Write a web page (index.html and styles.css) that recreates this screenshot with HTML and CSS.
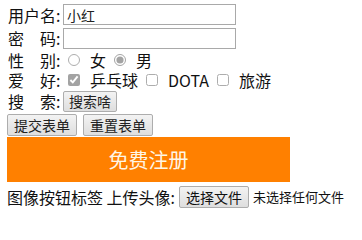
FILE: index.html
```html
<!DOCTYPE html>
<html>
<head>
<meta charset="utf-8">
<link rel="stylesheet" href="styles.css">
</head>
<body>
<form class="form">
  <div class="row r1"><span class="label">用户名:</span><input class="text" type="text" value="小红"></div>
  <div class="row r2"><span class="label">密&emsp;码:</span><input class="text" type="password"></div>
  <div class="row r3"><span class="label">性&emsp;别:</span>
    <input class="radio" type="radio" name="sex"><span class="opt">女</span>
    <input class="radio" type="radio" name="sex" checked><span class="opt">男</span></div>
  <div class="row r4"><span class="label">爱&emsp;好:</span>
    <input class="check" type="checkbox" checked><span class="opt">乒乓球</span>
    <input class="check" type="checkbox"><span class="opt">DOTA</span>
    <input class="check" type="checkbox"><span class="opt">旅游</span></div>
  <div class="row r5"><span class="label">搜&emsp;索:</span><button type="button" class="btn">搜索啥</button></div>
  <div class="row r6"><button type="reset" class="btn btn-lg">提交表单</button><button type="reset" class="btn btn-lg">重置表单</button></div>
  <div class="reg">免费注册</div>
  <div class="row r7"><span>图像按钮标签 上传头像:</span><span class="filebtn">选择文件</span><span class="nofile">未选择任何文件</span></div>
</form>
</body>
</html>
```
FILE: styles.css
```css
* { box-sizing: border-box; }
body {
  margin: 0;
  padding: 0;
  background: #fff;
  font-family: "Noto Sans CJK SC", "Liberation Sans", sans-serif;
  font-size: 16px;
  color: #111;
}
.form { padding: 4px 0 0 7px; }
.row { display: flex; align-items: center; line-height: 20px; }
.label { width: 56px; padding-left: 1px; white-space: nowrap; }
.r1 { height: 21px; }
.r2 { height: 22px; margin-top: 2px; }
.r3 { height: 21px; }
.r4 { height: 20px; }
.r5 { height: 22px; }
.r6 { height: 24px; margin-top: 1px; }
.text {
  width: 173px;
  height: 21px;
  border: 1px solid #a9a9a9;
  padding: 0 3px;
  font-family: "Noto Sans CJK SC", sans-serif;
  font-size: 14px;
  color: #222;
  margin: 0;
}
.radio, .check {
  margin: 0 10px 0 5px;
  width: 12px;
  height: 12px;
  accent-color: #666;
  filter: grayscale(1) opacity(0.6);
}
.opt { margin-right: 3px; }
.btn {
  font-family: "Noto Sans CJK SC", sans-serif;
  font-size: 14px;
  color: #222;
  background: linear-gradient(#f3f3f3, #dedede);
  border: 1px solid #adadad;
  border-radius: 2px;
  height: 21px;
  padding: 0 5px;
  margin: 0;
  line-height: 19px;
}
.btn-lg { height: 22px; margin-right: 6px; padding: 0 6px; }
.reg {
  width: 283px;
  height: 45px;
  background: #ff8000;
  color: #fff6e6;
  font-size: 20px;
  display: flex;
  align-items: center;
  justify-content: center;
}
.r7 { height: 30px; font-size: 16px; padding-left: 0; }
.filebtn {
  margin-left: 4px;
  font-size: 14px;
  height: 22px;
  line-height: 20px;
  padding: 0 6px;
  border: 1px solid #adadad;
  border-radius: 2px;
  background: linear-gradient(#f3f3f3, #dedede);
}
.nofile { margin-left: 4px; font-size: 13px; }
```
